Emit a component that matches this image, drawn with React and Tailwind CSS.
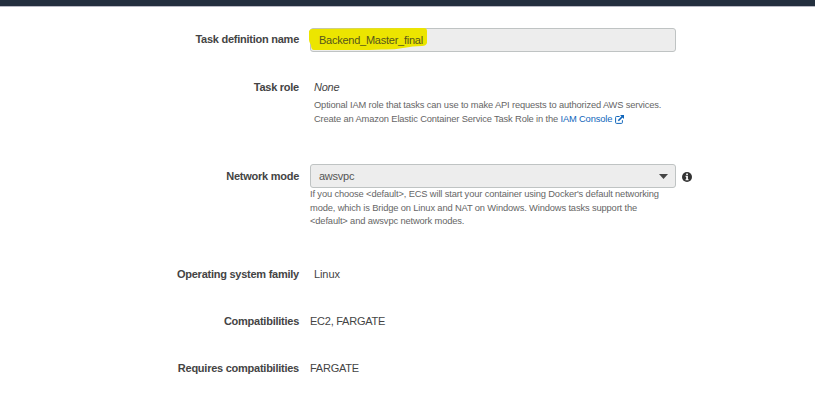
import React from 'react';

function Row({ label, className, children }) {
  return (
    <div className={`flex ${className}`}>
      <div className="w-[299px] shrink-0 text-right font-bold leading-6 text-[#444]">{label}</div>
      <div className="ml-[11px] w-[366px] shrink-0 leading-6">{children}</div>
    </div>
  );
}

function ExternalIcon() {
  return (
    <svg className="ml-[3px] inline-block align-[-2px]" width="9" height="9" viewBox="0 0 9 9" fill="none" stroke="currentColor">
      <path d="M4.6 1.5H1.5Q.6 1.5.6 2.4V7.5Q.6 8.4 1.5 8.4H6.5Q7.4 8.4 7.4 7.5V5.2" />
      <path d="M3.3 5.7 7.6 1.4" strokeWidth="1.6" />
      <path d="M5 0H9V4Z" fill="currentColor" stroke="none" />
    </svg>
  );
}

function InfoIcon() {
  return (
    <svg className="ml-[6px] mt-[8px] shrink-0" width="10" height="10" viewBox="0 0 10 10">
      <circle cx="5" cy="5" r="5" fill="#333" />
      <path d="M4.2 1.4H5.9V2.9H4.2ZM3.5 3.8H5.9V7.2H6.6V8.3H3.5V7.2H4.2V4.8H3.5Z" fill="#fff" />
    </svg>
  );
}

export default function App() {
  return (
    <div className="h-[417px] w-[815px] overflow-hidden bg-white font-['Liberation_Sans',Arial,sans-serif] text-[11px] tracking-[-0.25px] text-[#444]">
      <div className="h-[7px] border-b border-[#b9b9c4] bg-[#232f3e]" />
      <Row label="Task definition name" className="mt-5 h-12">
        <div className="relative mt-px flex h-6 items-center rounded-[3px] border border-[#bfc3c3] bg-[#ededed] pl-2">
          <svg className="absolute -left-[2px] -top-[1px]" width="119" height="24" viewBox="0 0 119 24">
            <path d="M3 1Q60 0 115 0Q118 0 118 3V15Q117 18 113 18Q104 18 94 20Q84 22 72 21.5Q60 22 48 22L5 22Q2 22 2 17Q0 14 0 12L0 3Q1 1 3 1Z" fill="#ece500" />
          </svg>
          <span className="relative text-[#55551c]">Backend_Master_final</span>
        </div>
      </Row>
      <Row label="Task role" className="h-[89px]">
        <div className="pl-1">
          <div className="h-[23px] italic">None</div>
          <div className="whitespace-nowrap text-[9.33px] leading-[14px] tracking-[-0.15px] text-[#666]">
            Optional IAM role that tasks can use to make API requests to authorized AWS services.
            <br />
            Create an Amazon Elastic Container Service Task Role in the <span className="text-[#1166bb]">IAM Console<ExternalIcon /></span>
          </div>
        </div>
      </Row>
      <div className="flex h-[98px]">
        <Row label="Network mode" className="">
          <div className="flex h-6 items-center justify-between rounded-[3px] border border-[#bfc3c3] bg-[#ededed] pl-2 pr-[7px] text-[#555]">
            <span>awsvpc</span>
            <svg width="9" height="5" viewBox="0 0 9 5"><path d="M0 0H9L4.5 5Z" fill="#444" /></svg>
          </div>
          <div className="whitespace-nowrap text-[9.33px] leading-[13.5px] tracking-[-0.14px] text-[#666]">
            If you choose &lt;default&gt;, ECS will start your container using Docker's default networking
            <br />
            mode, which is Bridge on Linux and NAT on Windows. Windows tasks support the
            <br />
            &lt;default&gt; and awsvpc network modes.
          </div>
        </Row>
        <InfoIcon />
      </div>
      <Row label="Operating system family" className="h-[47px]"><span className="pl-1 tracking-[-0.1px]">Linux</span></Row>
      <Row label="Compatibilities" className="h-[47px]">EC2, FARGATE</Row>
      <Row label="Requires compatibilities" className="h-[47px]">FARGATE</Row>
    </div>
  );
}
